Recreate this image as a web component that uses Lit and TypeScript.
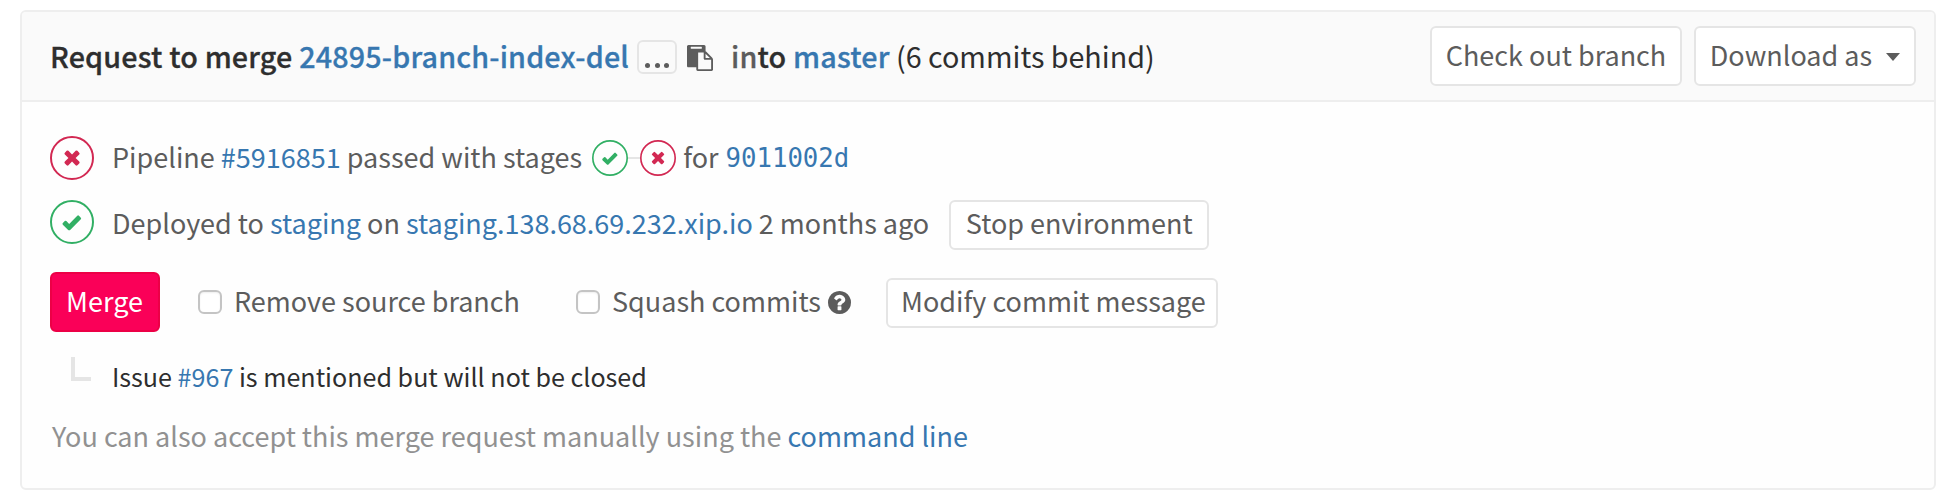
import { LitElement, html, css, svg } from "lit";

const MARKS = {
  success: svg`<path transform="translate(-1 -2.1) scale(1.04)" d="M15.2 22.3l-1.9 1.9a1.1 1.1 0 0 0 0 1.5l4.9 4.9a1.7 1.7 0 0 0 2.4 0l10-10.1a1.1 1.1 0 0 0 0-1.5l-1.8-1.8a1.1 1.1 0 0 0-1.6 0l-7.8 7.9-2.7-2.8a1.1 1.1 0 0 0-1.5 0z"/>`,
  failed: svg`<path transform="translate(-2.6 -2.6) scale(1.12)" d="M22 18.8l-3.2-3.2a1.1 1.1 0 0 0-1.6 0l-1.6 1.6a1.1 1.1 0 0 0 0 1.6l3.2 3.2-3.2 3.2a1.1 1.1 0 0 0 0 1.6l1.6 1.6a1.1 1.1 0 0 0 1.6 0l3.2-3.2 3.2 3.2a1.1 1.1 0 0 0 1.6 0l1.6-1.6a1.1 1.1 0 0 0 0-1.6L25.2 22l3.2-3.2a1.1 1.1 0 0 0 0-1.6l-1.6-1.6a1.1 1.1 0 0 0-1.6 0z"/>`,
};

class StatusIcon extends LitElement {
  static properties = { status: { type: String, reflect: true } };
  static styles = css`
    :host { display: block; width: 44px; height: 44px; flex: none; }
    :host([small]) { width: 36px; height: 36px; }
    svg { display: block; width: 100%; height: 100%; }
    .success { color: #31af64; }
    .failed { color: #d22852; }
  `;
  declare status: "success" | "failed";
  render() {
    return html`<svg class=${this.status} viewBox="0 0 44 44" fill="currentColor">
      <circle cx="22" cy="22" r="21" fill="none" stroke="currentColor" stroke-width="2" />
      ${MARKS[this.status]}
    </svg>`;
  }
}
customElements.define("status-icon", StatusIcon);

class AppRoot extends LitElement {
  static styles = css`
    :host {
      display: block;
      box-sizing: border-box;
      height: 500px;
      padding: 10px 22px 10px 20px;
      background: #fff;
      color: #5c5c5c;
      font: 27px/40px "Noto Sans CJK SC", "Noto Sans", sans-serif;
    }
    * { box-sizing: border-box; }
    .card { height: 480px; border: 2px solid #eee; border-radius: 6px; background: #fefefe; overflow: hidden; }
    .head, .body { white-space: pre; }
    .head {
      display: flex; align-items: center; height: 90px; padding: 0 18px 0 28px;
      background: #fafafa; border-bottom: 2px solid #eee;
      font-size: 28.7px; color: #2e2e2e;
    }
    .title { display: flex; align-items: center; flex: 1; }
    b { font-weight: 500; letter-spacing: 0.17px; -webkit-text-stroke: 0.3px currentColor; }
    .muted { color: #5c5c5c; }
    .link { color: #3777b0; }
    .more {
      display: flex; justify-content: center; align-items: flex-end; gap: 4.4px;
      width: 40px; height: 34px; margin: 1px 10px 0 8px; padding-bottom: 4px;
      border: 2px solid #e5e5e5; border-radius: 6px;
    }
    .dot { width: 5px; height: 5px; border-radius: 50%; background: #5c5c5c; }
    .paste { display: block; width: 26px; height: 26px; margin: 4px 18px 0 0; fill: #5c5c5c; }
    .btn {
      display: flex; align-items: center; justify-content: center; flex: none; height: 50px;
      border: 2px solid #e5e5e5; border-radius: 6px; background: #fff;
      font-size: 27px; color: #5c5c5c;
    }
    .tall { height: 60px; margin-bottom: 1px; padding-bottom: 2px; }
    .checkout { width: 252px; margin-right: 12px; }
    .download { width: 222px; gap: 14px; }
    .caret { border: solid transparent; border-width: 8px 7px 0; border-top-color: #5c5c5c; margin-top: 4px; }
    .body { display: flex; flex-direction: column; padding: 34px 28px 0; }
    .row { display: flex; align-items: center; height: 44px; flex: none; }
    .row > .text { margin-bottom: 2px; }
    .row status-icon { margin-right: 18px; }
    .deploy { height: 50px; margin-top: 17px; }
    .deploy > .text { margin: 2px 0 0; letter-spacing: -0.01px; }
    .stages { display: flex; align-items: center; margin: 0 7px 0 10px; }
    .stages status-icon { margin: 0; }
    .line { width: 12px; height: 2px; background: #e5e5e5; }
    .sha { margin-left: 1px; font-family: "DejaVu Sans Mono", monospace; font-size: 25.7px; }
    .stop { width: 260px; margin: 6px 0 0 20px; padding-bottom: 4px; }
    .actions { height: 60px; margin-top: 25px; }
    .merge { width: 110px; height: 60px; padding: 0 1px 2px 0; background: #fa0058; border-color: #ec0046; color: #fff; }
    .check {
      width: 24px; height: 24px; border: 2px solid #c4c4c4; border-radius: 6px; background: #fff;
      box-shadow: inset 0 1px 2px #eee;
    }
    .remove { margin: 0 12px 0 38px; }
    .squash { margin: 0 12px 0 56px; }
    .help { display: block; width: 23px; height: 23px; margin: 0 35px 0 7px; }
    .modify { width: 332px; margin-top: 2px; padding: 0 0 4px 3px; }
    .issue { height: 40px; margin-top: 26px; font-size: 25.1px; color: #2e2e2e; }
    .issue > .text { margin: 0 0 4px -1px; }
    .elbow { width: 20px; height: 24px; margin: 0 22px 18px 21px; border: solid #e5e5e5; border-width: 0 0 4px 4px; }
    .manual { height: 40px; margin-top: 18px; padding-left: 2px; color: #919191; }
  `;
  render() {
    return html`<section class="card">
      <header class="head"><div class="title"><b>Request to merge </b><b class="link">24895-branch-index-del</b><div class="more"><i class="dot"></i><i class="dot"></i><i class="dot"></i></div><svg class="paste" viewBox="0 0 1792 1792"><path d="M768 1664h896v-640h-416q-40 0-68-28t-28-68v-416h-384v1152zm256-1440v-64q0-13-9.500-22.500t-22.500-9.500h-704q-13 0-22.500 9.500t-9.500 22.500v64q0 13 9.500 22.500t22.500 9.500h704q13 0 22.500-9.500t9.500-22.500zm256 672h299l-299-299v299zm512 128v672q0 40-28 68t-68 28h-960q-40 0-68-28t-28-68v-160h-544q-40 0-68-28t-28-68v-1344q0-40 28-68t68-28h1088q40 0 68 28t28 68v328q21 13 36 28l408 408q28 28 48 76t20 88z"/></svg><b><span class="muted">in</span>to </b><b class="link">master</b><span> (6 commits behind)</span></div><div class="btn tall checkout">Check out branch</div><div class="btn tall download">Download as<i class="caret"></i></div></header>
      <div class="body"><div class="row"><status-icon status="failed"></status-icon><span class="text">Pipeline <span class="link">#5916851</span> passed with stages</span><div class="stages"><status-icon small status="success"></status-icon><i class="line"></i><status-icon small status="failed"></status-icon></div><span class="text">for </span><span class="link sha">9011002d</span></div><div class="row deploy"><status-icon status="success"></status-icon><span class="text">Deployed to <span class="link">staging</span> on <span class="link">staging.138.68.69.232.xip.io</span> 2 months ago</span><div class="btn stop">Stop environment</div></div><div class="row actions"><div class="btn merge">Merge</div><i class="check remove"></i><span class="text">Remove source branch</span><i class="check squash"></i><span class="text">Squash commits</span><svg class="help" viewBox="128 128 1536 1536"><path fill="#5c5c5c" d="M1024 1376v-192q0-14-9-23t-23-9h-192q-14 0-23 9t-9 23v192q0 14 9 23t23 9h192q14 0 23-9t9-23zm256-672q0-88-55.500-163t-138.500-116-170-41q-243 0-371 213-15 24 8 42l132 100q7 6 19 6 16 0 25-12 53-68 86-92 34-24 86-24 48 0 85.500 26t37.500 59q0 38-20 61t-68 45q-63 28-115.500 86.500t-52.500 125.500v36q0 14 9 23t23 9h192q14 0 23-9t9-23q0-19 21.500-49.500t54.500-49.500q32-18 49-28.500t46-35 44.500-48 28-60.500 12.500-81zm384 192q0 209-103 385.500t-279.500 279.500-385.500 103-385.500-103-279.500-279.500-103-385.500 103-385.500 279.500-279.500 385.500-103 385.500 103 279.500 279.500 103 385.500z"/></svg><div class="btn modify">Modify commit message</div></div><div class="row issue"><i class="elbow"></i><span class="text">Issue <span class="link">#967</span> is mentioned but will not be closed</span></div><div class="row manual">You can also accept this merge request manually using the <span class="link">command line</span></div></div>
    </section>`;
  }
}
customElements.define("app-root", AppRoot);
